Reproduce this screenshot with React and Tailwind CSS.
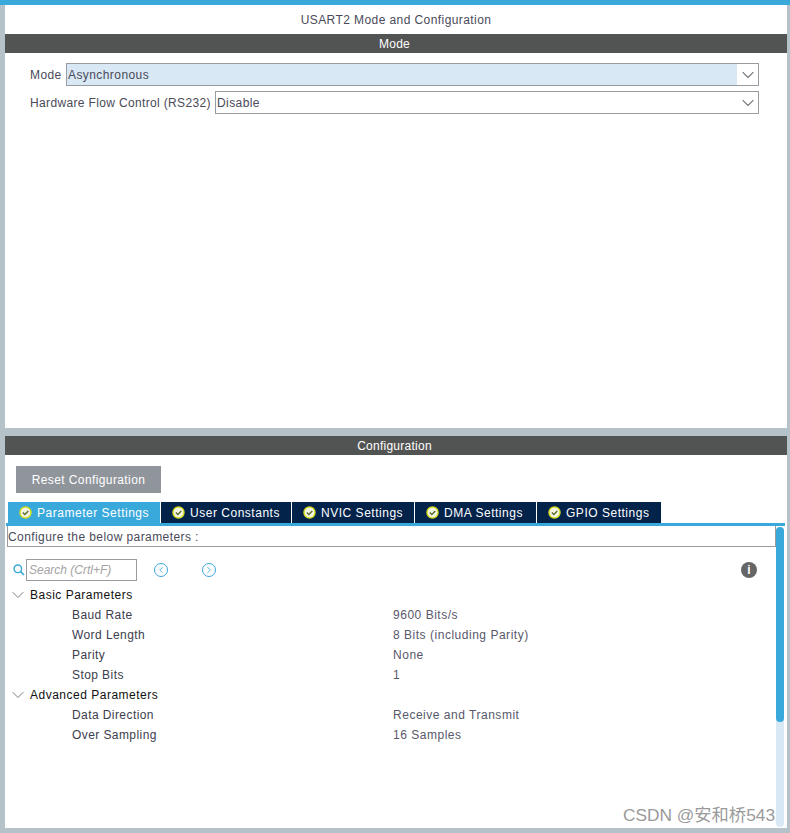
import { ChevronDown, ChevronLeft, ChevronRight } from "lucide-react";

const tabs = [
  { label: "Parameter Settings", width: "w-[153px]", active: true },
  { label: "User Constants", width: "w-[131px]" },
  { label: "NVIC Settings", width: "w-[123px]" },
  { label: "DMA Settings", width: "w-[122px]" },
  { label: "GPIO Settings", width: "w-[125px]" },
];

const basicRows = [
  ["Baud Rate", "9600 Bits/s"],
  ["Word Length", "8 Bits (including Parity)"],
  ["Parity", "None"],
  ["Stop Bits", "1"],
];

const advancedRows = [
  ["Data Direction", "Receive and Transmit"],
  ["Over Sampling", "16 Samples"],
];

function SelectBox({ value, highlight, className }) {
  return (
    <div className={`flex h-[23px] border border-[#989ca0] bg-white ${className}`}>
      <div className={`flex-1 pl-[1px] leading-[22px] ${highlight ? "bg-[#d8e8f5]" : ""}`}>{value}</div>
      <div className="flex w-[21px] items-center justify-center pl-[1px]">
        <ChevronDown size={20} strokeWidth={1.3} className="shrink-0 text-[#7c7e81]" />
      </div>
    </div>
  );
}

function SectionBar({ children }) {
  return (
    <div className="h-[19px] bg-[#525453] pr-[3px] text-center leading-[20px] tracking-[0.25px] text-white">{children}</div>
  );
}

function CheckIcon() {
  return (
    <svg width="13" height="13" viewBox="0 0 13 13" className="shrink-0">
      <circle cx="6.5" cy="6.5" r="6.2" fill="#d6dc1e" />
      <circle cx="6.5" cy="6.5" r="4.8" fill="#f3f5e4" />
      <path d="M3.8 6.6 L5.8 8.6 L9.3 4.9" fill="none" stroke="#5f6a30" strokeWidth="1.4" />
    </svg>
  );
}

function NavButton({ children }) {
  return (
    <div className="flex h-[14px] w-[14px] items-center justify-center rounded-full border-[1.5px] border-[#39a9dc] text-[#39a9dc]">
      {children}
    </div>
  );
}

function GroupRow({ label }) {
  return (
    <div className="flex h-5 items-center text-[#111111]">
      <div className="flex w-[21px] justify-end">
        <ChevronDown size={20} strokeWidth={1.2} className="shrink-0 text-[#7c7e81]" />
      </div>
      <span className="ml-[2px] tracking-[0.5px]">{label}</span>
    </div>
  );
}

function ParamRow({ name, value }) {
  return (
    <div className="flex h-5 items-center">
      <span className="ml-[65px] w-[321px] text-[#3c3c4c]">{name}</span>
      <span className="tracking-[0.52px] text-[#58586a]">{value}</span>
    </div>
  );
}

export default function App() {
  return (
    <div
      className="relative flex h-[833px] w-[790px] flex-col overflow-hidden bg-[#b6c2c9] text-[12px] tracking-[0.42px] text-[#4a4a58]"
      style={{ fontFamily: '"Liberation Sans", Arial, sans-serif' }}
    >
      <div className="h-[5px] bg-[#39a9dc]" />
      <div className="flex flex-1 flex-col pb-[5px] pl-[5px] pr-[3px]">
        <section className="h-[423px] bg-white">
          <div className="h-[29px] text-center leading-[30px]">USART2 Mode and Configuration</div>
          <SectionBar>Mode</SectionBar>
          <div className="flex flex-col gap-[5px] pl-[25px] pr-[28px] pt-[10px]">
            <div className="flex items-center">
              <span className="w-[36px]">Mode</span>
              <SelectBox value="Asynchronous" highlight className="flex-1" />
            </div>
            <div className="flex items-center">
              <span className="w-[185px] whitespace-nowrap tracking-[0.35px]">Hardware Flow Control (RS232)</span>
              <SelectBox value="Disable" className="flex-1" />
            </div>
          </div>
        </section>

        <section className="mt-[8px] flex flex-1 flex-col bg-white">
          <SectionBar>Configuration</SectionBar>
          <div className="pl-[11px] pt-[11px]">
            <button className="h-[27px] w-[145px] bg-[#8f959b] tracking-[0.4px] text-white">Reset Configuration</button>
          </div>
          <div className="ml-[3px] mt-[9px] flex h-[21px]">
            {tabs.map((tab) => (
              <div
                key={tab.label}
                className={`flex items-center gap-[5px] border-r border-white pl-[11px] tracking-[0.52px] text-white ${tab.width} ${tab.active ? "bg-[#39a9dc]" : "bg-[#03234b]"}`}
              >
                <CheckIcon />
                <span className="whitespace-nowrap">{tab.label}</span>
              </div>
            ))}
          </div>
          <div className="ml-[1px] mr-[2px] h-[3px] bg-[#39a9dc]" />

          <div className="flex flex-1 pl-[2px] pr-[3px]">
            <div className="flex-1">
              <div className="h-[21px] border-x border-b border-[#989ca0] leading-[22px]">Configure the below parameters :</div>
              <div className="flex h-[35px] items-center pl-[6px] pr-[19px] pt-[10px]">
                <svg width="12" height="12" viewBox="0 0 12 12" className="shrink-0">
                  <circle cx="4.8" cy="4.8" r="3.8" fill="none" stroke="#39a9dc" strokeWidth="1.4" />
                  <path d="M7.6 7.6 L11 11" stroke="#39a9dc" strokeWidth="1.6" />
                </svg>
                <div className="ml-[1px] h-[22px] w-[111px] border border-[#989ca0] pl-[2px] italic leading-[21px] tracking-normal text-[#a3a3a3]">Search (Crtl+F)</div>
                <div className="ml-[17px]">
                  <NavButton><ChevronLeft size={10} strokeWidth={2} /></NavButton>
                </div>
                <div className="ml-[34px]">
                  <NavButton><ChevronRight size={10} strokeWidth={2} /></NavButton>
                </div>
                <div className="ml-auto flex h-4 w-4 items-center justify-center rounded-full bg-[#666666] font-bold leading-none tracking-normal text-white">i</div>
              </div>
              <div className="pt-[3px]">
                <GroupRow label="Basic Parameters" />
                {basicRows.map(([name, value]) => (
                  <ParamRow key={name} name={name} value={value} />
                ))}
                <GroupRow label="Advanced Parameters" />
                {advancedRows.map(([name, value]) => (
                  <ParamRow key={name} name={name} value={value} />
                ))}
              </div>
            </div>
            <div className="mt-[1px] mb-[1px] flex w-[8px] flex-col rounded-full bg-[#d8e8f5]">
              <div className="h-[195px] rounded-full bg-[#39a9dc]" />
            </div>
          </div>
        </section>
      </div>
      <div
        className="absolute left-[623px] top-[804px] text-[17.3px] leading-[22px] tracking-normal text-[#9a9a9a]"
        style={{ fontFamily: '"Liberation Sans", "Noto Sans CJK SC", sans-serif' }}
      >
        CSDN @安和桥543
      </div>
    </div>
  );
}
